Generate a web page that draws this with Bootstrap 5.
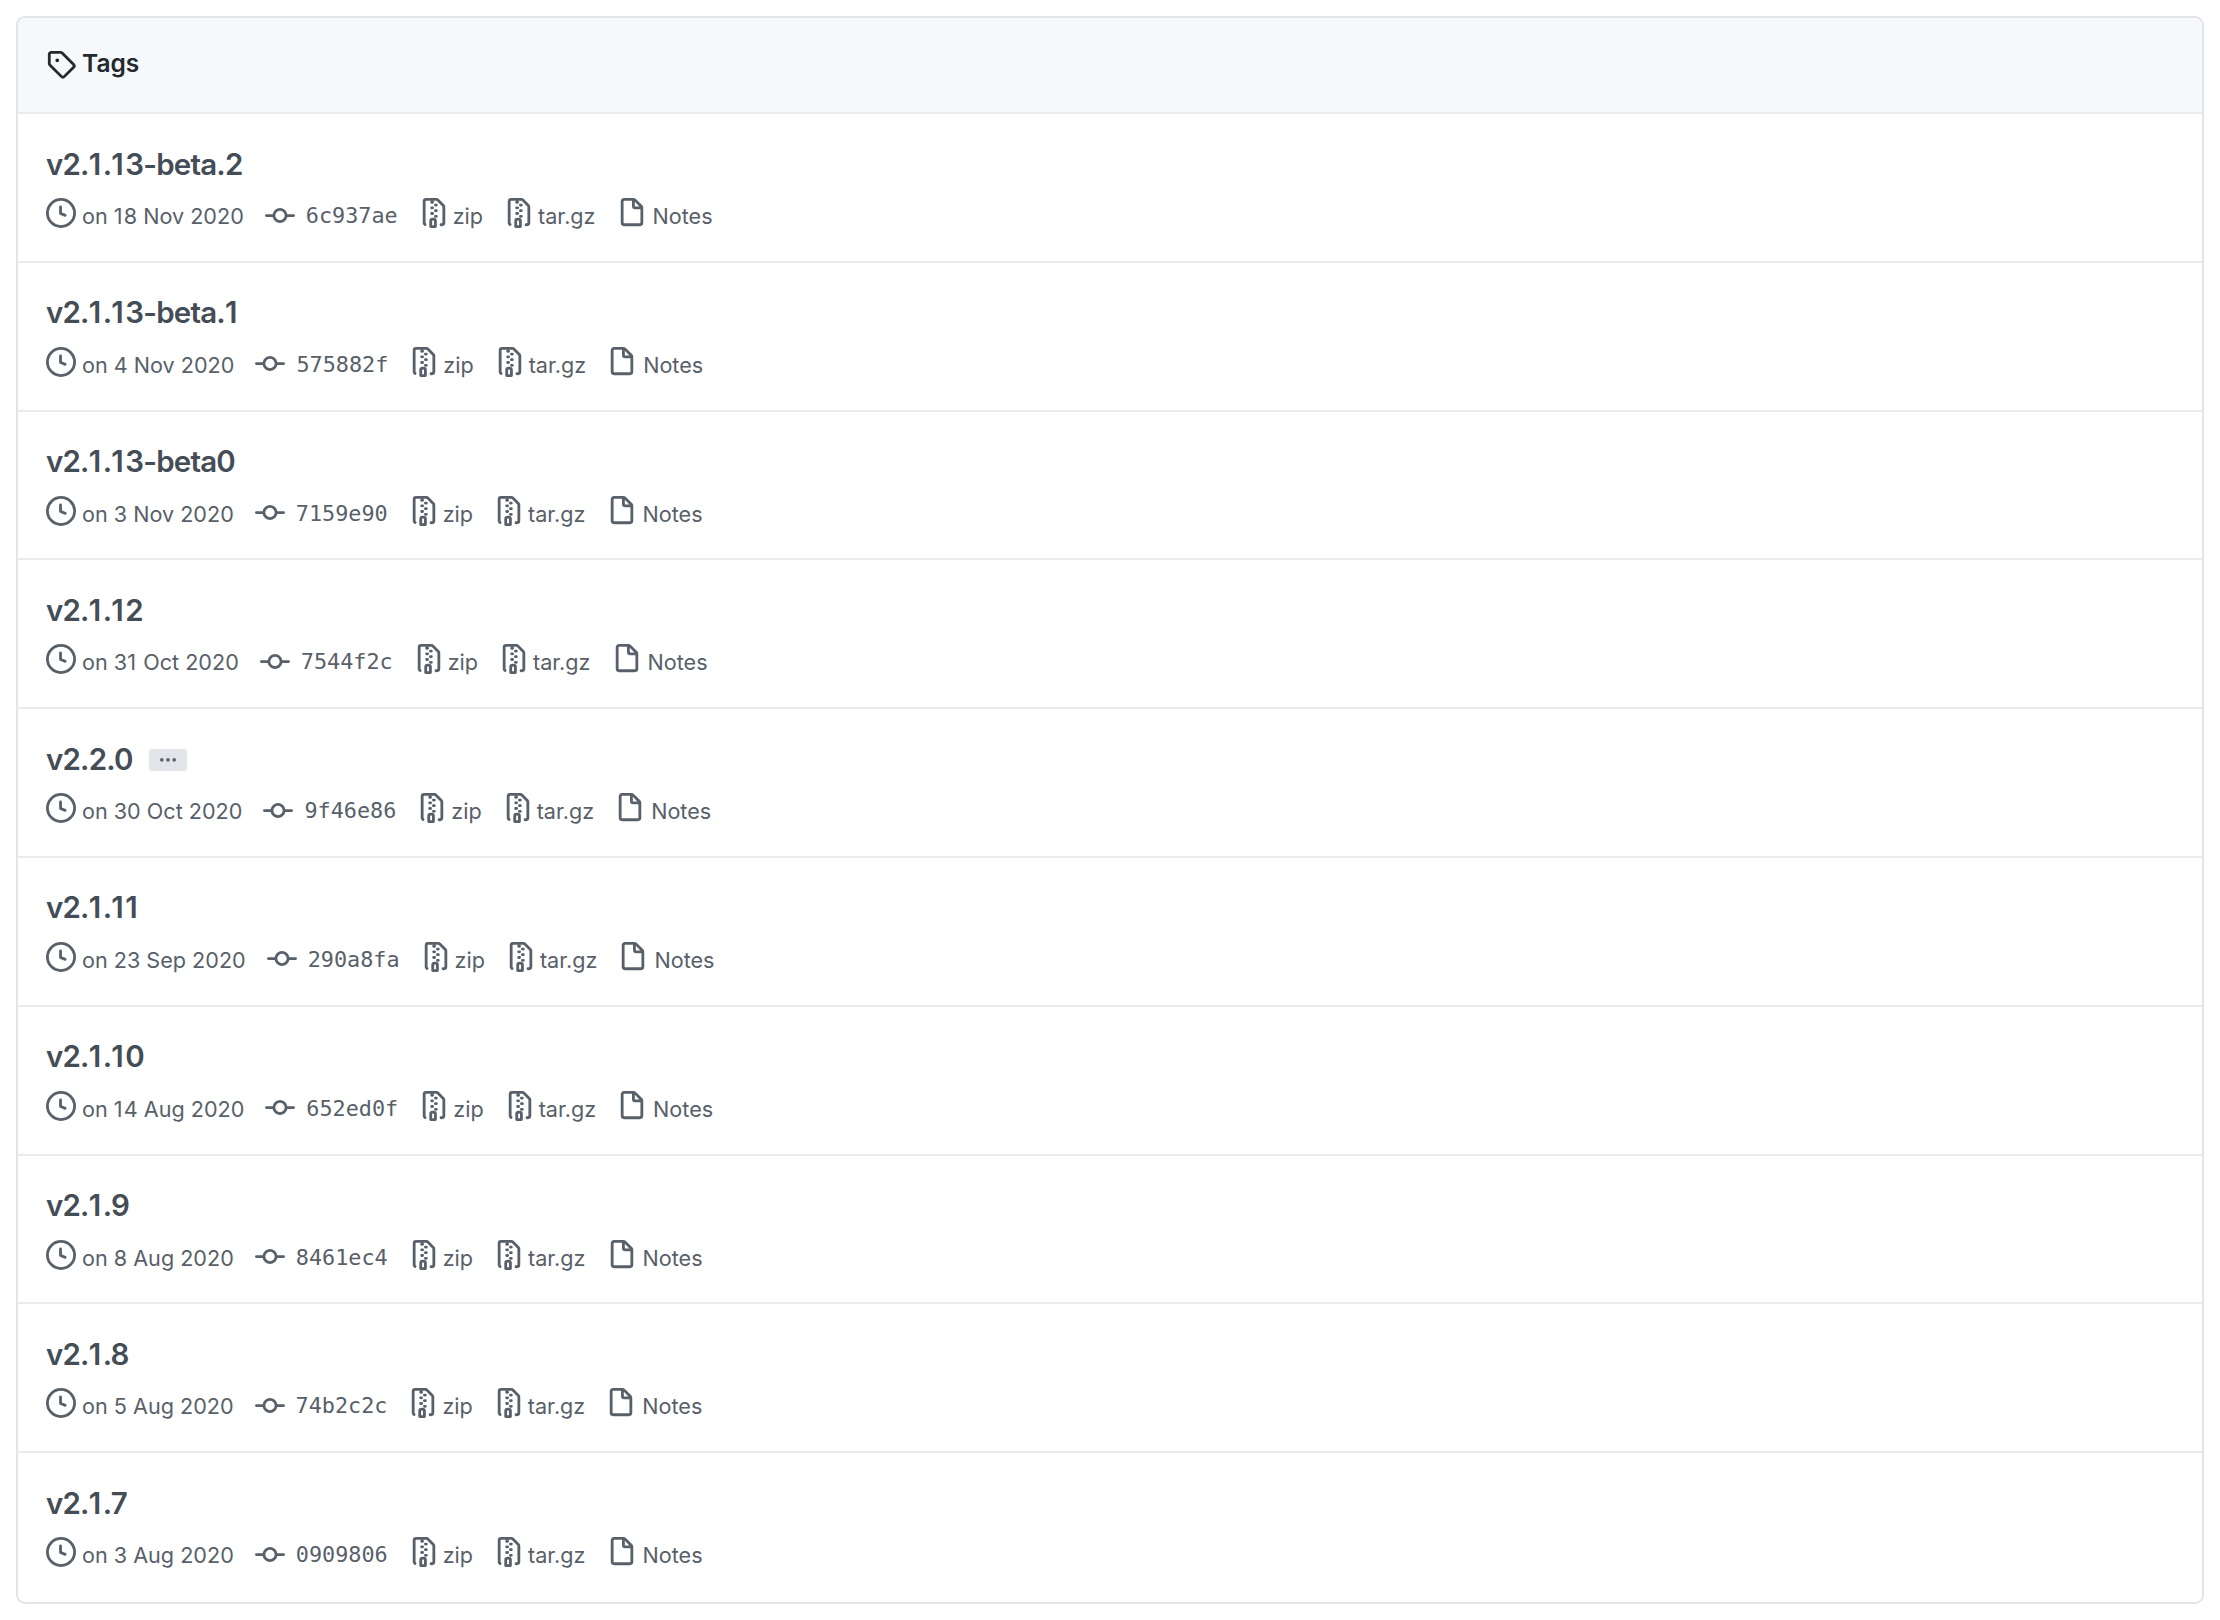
<!DOCTYPE html>
<html lang="en"><head><meta charset="utf-8"><title>Tags</title>
<link href="https://cdn.jsdelivr.net/npm/bootstrap@5.3.0/dist/css/bootstrap.min.css" rel="stylesheet">
<style>
body{background:#fff;font-family:Inter,"Liberation Sans",sans-serif;color:#586069;padding:16px}
.tags-box{border:2px solid #e1e4e8;border-radius:9px;overflow:hidden}
.tags-head{background:#f6f8fa;height:96px;border-bottom:2px solid #e9ebef;padding:0 0 3px 28px;font-size:24.5px;font-weight:600;color:#24292e;gap:6px}
.tag-row{height:148.8px;border-bottom:2px solid #e9ebef;padding:28.5px 28px 0}
.tag-row:last-child{border-bottom:0}
.tag-title{font-size:29.5px;line-height:42px;font-weight:600;color:#444d56;letter-spacing:-.8px;height:42px;gap:16px}
.tag-title .one{letter-spacing:1.5px}
.more-pill{width:38px;height:22px;background:#e1e4e8;border-radius:3px;margin-top:3px}
.more-pill svg{width:18px;height:18px;fill:#586069}
.tag-meta{font-size:21.6px;line-height:30px;margin-top:11.5px;height:34px}
.tag-meta .one{letter-spacing:1.2px}
.meta-item{margin-right:21px;color:#586069;text-decoration:none}
.ico{width:30px;height:30px;fill:#586069;flex:none}
.ico-date{margin-right:6px}
.ico-commit{margin-right:11px;margin-top:5px}
.ico-zip{margin-right:4px}
.ico-file{margin-right:6px}
.hash{font-family:"DejaVu Sans Mono","Liberation Mono",monospace;font-size:21.8px;padding-top:6px}
.meta-text{padding-top:6px}
</style></head><body>
<svg width="0" height="0" class="d-none"><defs>
<symbol id="i-tag" viewBox="0 0 16 16"><path fill-rule="evenodd" d="M2.5 7.775V2.75a.25.25 0 01.25-.25h5.025a.25.25 0 01.177.073l6.25 6.25a.25.25 0 010 .354l-5.025 5.025a.25.25 0 01-.354 0l-6.25-6.25a.25.25 0 01-.073-.177zm-1.5 0V2.75C1 1.784 1.784 1 2.75 1h5.025c.464 0 .91.184 1.238.513l6.25 6.25a1.75 1.75 0 010 2.474l-5.026 5.026a1.75 1.75 0 01-2.474 0l-6.25-6.25A1.75 1.75 0 011 7.775zM6 5a1 1 0 100 2 1 1 0 000-2z"/></symbol>
<symbol id="i-clock" viewBox="0 0 16 16"><path fill-rule="evenodd" d="M1.5 8a6.5 6.5 0 1113 0 6.5 6.5 0 01-13 0zM8 0a8 8 0 100 16A8 8 0 008 0zm.5 4.75a.75.75 0 00-1.5 0v3.5a.75.75 0 00.471.696l2.5 1a.75.75 0 00.557-1.392L8.5 7.742V4.75z"/></symbol>
<symbol id="i-commit" viewBox="0 0 16 16"><path fill-rule="evenodd" d="M10.5 7.75a2.5 2.5 0 11-5 0 2.5 2.5 0 015 0zm1.43.75a4.002 4.002 0 01-7.86 0H.75a.75.75 0 110-1.5h3.32a4.001 4.001 0 017.86 0h3.32a.75.75 0 110 1.5h-3.32z"/></symbol>
<symbol id="i-zip" viewBox="0 0 16 16"><path fill-rule="evenodd" d="M3.5 1.75a.25.25 0 01.25-.25h3a.75.75 0 000 1.5h.5a.75.75 0 000-1.5h2.086a.25.25 0 01.177.073l2.914 2.914a.25.25 0 01.073.177v8.586a.25.25 0 01-.25.25h-.5a.75.75 0 000 1.5h.5A1.75 1.75 0 0014 13.25V4.664c0-.464-.184-.909-.513-1.237L10.573.513A1.75 1.75 0 009.336 0H3.75A1.75 1.75 0 002 1.75v11.5c0 .649.353 1.214.874 1.515a.75.75 0 10.752-1.298.25.25 0 01-.126-.217V1.75zM8.75 3a.75.75 0 000 1.5h.5a.75.75 0 000-1.5h-.5zM6 5.25a.75.75 0 01.75-.75h.5a.75.75 0 010 1.5h-.5A.75.75 0 016 5.25zm2 1.5A.75.75 0 018.75 6h.5a.75.75 0 010 1.5h-.5A.75.75 0 018 6.75zm-1.25.75a.75.75 0 000 1.5h.5a.75.75 0 000-1.5h-.5zM8 9.75A.75.75 0 018.75 9h.5a.75.75 0 010 1.5h-.5A.75.75 0 018 9.75zm-.75.75a1.75 1.75 0 00-1.75 1.75v3c0 .414.336.75.75.75h2.5a.75.75 0 00.75-.75v-3a1.75 1.75 0 00-1.75-1.75h-.5zM7 12.25a.25.25 0 01.25-.25h.5a.25.25 0 01.25.25v2.25H7v-2.25z"/></symbol>
<symbol id="i-file" viewBox="0 0 16 16"><path fill-rule="evenodd" d="M3.75 1.5a.25.25 0 00-.25.25v11.5c0 .138.112.25.25.25h8.5a.25.25 0 00.25-.25V6H9.75A1.75 1.75 0 018 4.25V1.5H3.75zm5.75.56v2.19c0 .138.112.25.25.25h2.19L9.5 2.06zM2 1.75C2 .784 2.784 0 3.75 0h5.086c.464 0 .909.184 1.237.513l3.414 3.414c.329.328.513.773.513 1.237v8.086A1.75 1.75 0 0112.25 15h-8.5A1.75 1.75 0 012 13.25V1.75z"/></symbol>
<symbol id="i-dots" viewBox="0 0 16 16"><path d="M8 9.5a1.6 1.6 0 100-3.2 1.6 1.6 0 000 3.2zM2.5 9.5a1.6 1.6 0 100-3.2 1.6 1.6 0 000 3.2zm11 0a1.6 1.6 0 100-3.2 1.6 1.6 0 000 3.2z"/></symbol>
</defs></svg>
<div id="box" class="tags-box card">
<div class="tags-head d-flex align-items-center"><svg class="ico" style="fill:#24292e"><use href="#i-tag"/></svg><span>Tags</span></div>
<div id="list" class="list-group-flush"></div>
</div>
<script>
const data=[["v2.1.13-beta.2","on 18 Nov 2020","6c937ae"],["v2.1.13-beta.1","on 4 Nov 2020","575882f"],["v2.1.13-beta0","on 3 Nov 2020","7159e90"],["v2.1.12","on 31 Oct 2020","7544f2c"],["v2.2.0","on 30 Oct 2020","9f46e86",1],["v2.1.11","on 23 Sep 2020","290a8fa"],["v2.1.10","on 14 Aug 2020","652ed0f"],["v2.1.9","on 8 Aug 2020","8461ec4"],["v2.1.8","on 5 Aug 2020","74b2c2c"],["v2.1.7","on 3 Aug 2020","0909806"]];
const ic=(n,c)=>`<svg class="ico ${c}"><use href="#i-${n}"/></svg>`;
const ones=s=>s.replace(/1/g,'<span class="one">1</span>');
document.getElementById('list').innerHTML=data.map(d=>`<div class="tag-row">
<div class="tag-title d-flex align-items-center"><span>${ones(d[0])}</span>${d[3]?'<span class="more-pill d-flex align-items-center justify-content-center"><svg><use href="#i-dots"/></svg></span>':''}</div>
<div class="tag-meta d-flex align-items-center">
<span class="meta-item d-flex align-items-center">${ic('clock','ico-date')}<span class="meta-text">${ones(d[1])}</span></span>
<span class="meta-item d-flex align-items-center">${ic('commit','ico-commit')}<span class="hash">${d[2]}</span></span>
<span class="meta-item d-flex align-items-center">${ic('zip','ico-zip')}<span class="meta-text">zip</span></span>
<span class="meta-item d-flex align-items-center">${ic('zip','ico-zip')}<span class="meta-text">tar.gz</span></span>
<span class="meta-item d-flex align-items-center">${ic('file','ico-file')}<span class="meta-text">Notes</span></span>
</div></div>`).join('');
</script>
</body></html>
